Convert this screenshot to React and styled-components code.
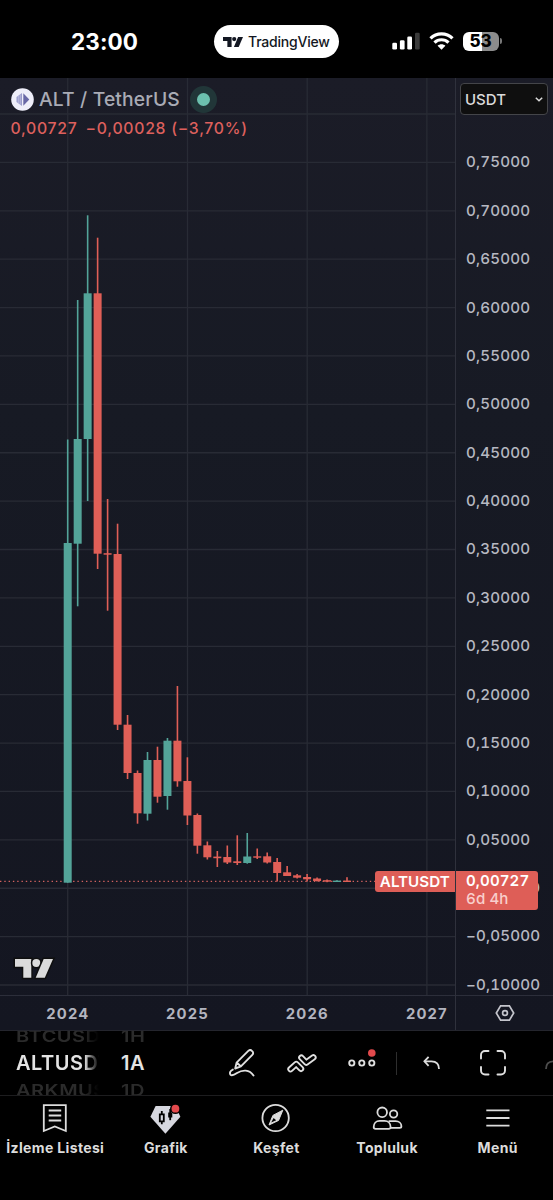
import React from 'react';
import styled, { createGlobalStyle } from 'styled-components';

const GlobalStyle = createGlobalStyle`
  body {
    margin: 0;
    background: #000;
    font-family: 'Inter', 'Liberation Sans', sans-serif;
  }

  svg {
    display: block;
    flex: none;
  }
`;

const Screen = styled.div`
  width: 553px;
  height: 1200px;
  display: flex;
  flex-direction: column;
  overflow: hidden;
  background: #000;
  color: #dbdbdb;
`;

/* status bar */

const StatusBar = styled.header`
  height: 78px;
  flex: none;
  box-sizing: border-box;
  padding: 25px 51.5px 0 71px;
  display: flex;
  align-items: flex-start;
`;

const Clock = styled.div`
  width: 143px;
  line-height: 33px;
  font-size: 22.5px;
  font-weight: 700;
  letter-spacing: 0.1px;
  color: #fff;
`;

const AppPill = styled.div`
  width: 124.5px;
  height: 33px;
  box-sizing: border-box;
  padding-left: 9px;
  display: flex;
  align-items: center;
  gap: 5px;
  border-radius: 17px;
  background: #fff;
  color: #131722;
  font-size: 14px;
  font-weight: 500;
  letter-spacing: -0.2px;
`;

const StatusIcons = styled.div`
  height: 32px;
  margin-left: auto;
  display: flex;
  align-items: center;
  gap: 9px;
`;

const Battery = styled.div`
  display: flex;
  align-items: center;
  gap: 1px;
`;

const BatteryBody = styled.div`
  width: 36px;
  height: 19px;
  border-radius: 6px;
  background: linear-gradient(90deg, #fff 54%, #8c8c8c 54%);
  color: #000;
  font-size: 17px;
  font-weight: 800;
  line-height: 19px;
  text-align: center;
`;

const BatteryNub = styled.div`
  width: 2px;
  height: 6px;
  border-radius: 0 2px 2px 0;
  background: #777;
`;

/* chart */

const ChartArea = styled.main`
  height: 952px;
  flex: none;
  display: flex;
  background: linear-gradient(180deg, #1b1c27 0%, #171a24 35%, #141621 100%);
`;

const PlotColumn = styled.section`
  width: 455px;
  flex: none;
`;

const Plot = styled.div`
  position: relative;
  height: 917px;
`;

const Legend = styled.div`
  position: absolute;
  left: 11px;
  top: 7px;
`;

const SymbolRow = styled.div`
  height: 28px;
  display: flex;
  align-items: center;
  font-size: 19.3px;
  font-weight: 500;
  color: #a9abb5;
`;

const SymbolName = styled.span`
  width: 146px;
  margin-left: 5px;
  white-space: nowrap;
  letter-spacing: 0.15px;
`;

const MarketDot = styled.span`
  width: 13px;
  height: 13px;
  margin-left: 5px;
  border: 7px solid #213638;
  border-radius: 50%;
  background: #6cc0ae;
`;

const ValueRow = styled.div`
  display: flex;
  gap: 8px;
  margin: 6px 0 0 -0.5px;
  line-height: 20px;
  font-size: 15.8px;
  font-weight: 550;
  letter-spacing: 0.72px;
  white-space: nowrap;
  color: #dd605d;
`;

const Watermark = styled.div`
  position: absolute;
  left: 15px;
  top: 881px;
`;

const SymbolTag = styled.div`
  position: absolute;
  right: 0;
  top: 793px;
  width: 80.5px;
  height: 21px;
  line-height: 22px;
  border-radius: 3px 0 0 3px;
  background: #de5e57;
  color: #fff;
  font-size: 15.2px;
  font-weight: 600;
  text-align: center;
`;

const TimeAxis = styled.div`
  height: 35px;
  box-sizing: border-box;
  padding-left: 8px;
  display: flex;
  overflow: hidden;
  border-top: 1px solid #2c2e3a;
`;

const TimeLabel = styled.span`
  width: 119.7px;
  flex: none;
  line-height: 36px;
  text-align: center;
  font-size: 14.8px;
  font-weight: 700;
  letter-spacing: 1.2px;
  color: #b2b4bf;
`;

const PriceAxis = styled.aside`
  position: relative;
  width: 98px;
  box-sizing: border-box;
  display: flex;
  flex-direction: column;
  border-left: 1px solid #2f313c;
`;

const CurrencySelect = styled.button`
  width: 88px;
  height: 32px;
  box-sizing: border-box;
  margin: 5px 0 0 4px;
  padding: 0 4px;
  display: flex;
  flex: none;
  align-items: center;
  justify-content: space-between;
  border: 1.5px solid #444549;
  border-radius: 4px;
  background: #0f0f0f;
  color: #dbdbdb;
  font-family: inherit;
  font-size: 15px;
  font-weight: 500;
`;

const PriceList = styled.div`
  height: 880px;
  padding: 23.4px 0 0 10px;
  box-sizing: border-box;
  display: flex;
  flex-direction: column;
`;

const PriceLabel = styled.span`
  height: 48.38px;
  flex: none;
  line-height: 48.38px;
  font-size: 15.2px;
  font-weight: 550;
  font-variant-numeric: tabular-nums;
  letter-spacing: 0.15px;
  white-space: nowrap;
  color: #b6b8c1;
`;

const PriceTag = styled.div`
  position: absolute;
  left: 0;
  top: 793px;
  width: 81.5px;
  height: 38.5px;
  box-sizing: border-box;
  padding: 1px 0 0 10px;
  border-radius: 0 3px 3px 0;
  background: #de5e57;
  color: #fff;
  font-size: 15.1px;
  font-weight: 600;
  font-variant-numeric: tabular-nums;
  line-height: 18px;
  letter-spacing: 0.1px;
`;

const Countdown = styled.div`
  color: #f8cfcc;
  font-weight: 500;
`;

const AxisSettings = styled.div`
  height: 35px;
  flex: none;
  box-sizing: border-box;
  display: flex;
  align-items: center;
  justify-content: center;
  border-top: 1px solid #2c2e3a;
`;

/* drawing toolbar */

const Toolbar = styled.div`
  height: 66px;
  flex: none;
  box-sizing: border-box;
  display: flex;
  border-top: 1px solid #24252d;
  border-bottom: 1.5px solid #1d1d1f;
  overflow: hidden;
`;

const Wheel = styled.div`
  width: ${(props) => props.$width}px;
  flex: none;
  margin-left: ${(props) => props.$gap}px;
  overflow: hidden;
  display: flex;
  flex-direction: column;
  font-size: 20px;
  font-weight: 600;
  letter-spacing: 0.5px;
  white-space: nowrap;
  ${(props) =>
    props.$fade &&
    'mask-image: linear-gradient(90deg, #000 82%, transparent 100%);'}
`;

const WheelItem = styled.span`
  height: 27px;
  flex: none;
  line-height: 27px;
  color: ${(props) => (props.$active ? '#e4e4e4' : '#2b2b2b')};
  ${(props) => !props.$active && 'transform: scaleY(0.8);'}

  &:first-child {
    margin-top: -8px;
  }
`;

const ToolButtons = styled.div`
  flex: 1;
  min-width: 0;
  padding-left: 62.5px;
  display: flex;
  align-items: center;
  overflow: hidden;
`;

const Tool = styled.div`
  width: ${(props) => props.$width}px;
  flex: none;
  display: flex;
  justify-content: center;
  opacity: ${(props) => (props.$dim ? 0.35 : 1)};
`;

const Separator = styled.div`
  width: 1px;
  height: 23px;
  flex: none;
  margin-left: 4.5px;
  background: #2e2e2e;
`;

/* bottom tabs */

const TabBar = styled.nav`
  flex: 1;
  display: grid;
  grid-template-columns: repeat(5, 1fr);
`;

const Tab = styled.div`
  padding-top: 6px;
  display: flex;
  flex-direction: column;
  align-items: center;
  gap: 2px;
  font-size: 14px;
  font-weight: 700;
  line-height: 23px;
  letter-spacing: 0.35px;
  white-space: nowrap;
  color: #dcdcdc;
`;

const PRICES = [
  '0,75000', '0,70000', '0,65000', '0,60000', '0,55000', '0,50000',
  '0,45000', '0,40000', '0,35000', '0,30000', '0,25000', '0,20000',
  '0,15000', '0,10000', '0,05000', '−0,00000', '−0,05000', '−0,10000',
];

const YEARS = ['2024', '2025', '2026', '2027'];

// [wick top, body top, body bottom, wick bottom, rising]
const CANDLES = [
  [361.5, 465, 804.7, 804.7, true],
  [222, 361, 465.7, 528.3, true],
  [137.3, 215.3, 361, 423, true],
  [159.7, 215.3, 475.7, 491],
  [421, 475.2, 476.7, 532.7],
  [445.7, 476, 646.7, 652],
  [637, 646.7, 695, 701],
  [692.5, 695, 735.3, 745.7],
  [674, 682, 735.7, 742.5, true],
  [668.7, 682, 718.7, 724.7],
  [660, 662.7, 718, 731.7, true],
  [608, 662.7, 703.3, 708.7],
  [679.3, 703, 737.5, 747],
  [735.5, 737, 767.7, 775.7],
  [763.5, 767.3, 779.3, 781.5],
  [773, 778.6, 780.2, 789],
  [767.5, 779, 784.5, 786],
  [757.3, 783.3, 785, 787],
  [755, 778.5, 785, 785.7, true],
  [770.5, 778.3, 779.7, 781],
  [774.5, 778.3, 784.5, 785.5],
  [780, 784, 795, 803.5],
  [788, 794.3, 798, 798],
  [796, 797.3, 799.7, 800.5],
  [796, 799, 801.3, 803.5],
  [799.5, 800.5, 803, 803.5],
  [801.5, 802.2, 803.7, 804.2],
  [802.2, 802.6, 804, 804, true],
  [799.2, 802.6, 804, 804],
];

function TradingViewMark({ width, color, outline }) {
  return (
    <svg width={width} viewBox="0 0 38 19" overflow="visible">
      <g
        fill={color}
        stroke={outline}
        strokeWidth={outline ? 3 : 0}
        paintOrder="stroke"
      >
        <path d="M0 0H16.3V18.8H8.3V7.8H0Z" />
        <circle cx="21.3" cy="4" r="4" />
        <path d="M28.7 0H38L29.8 18.8H20.7Z" />
      </g>
    </svg>
  );
}

function CandleChart() {
  const rows = Array.from({ length: 19 }, (_, i) => 36 + i * 48.39);
  const cols = [67.7, 187.5, 307.2, 426.9];

  return (
    <svg width="455" height="917">
      <g stroke="#282b35" strokeWidth="1.3">
        {rows.map((y) => (
          <line key={y} x1="0" x2="455" y1={y} y2={y} />
        ))}
        {cols.map((x) => (
          <line key={x} y1="0" y2="917" x1={x} x2={x} />
        ))}
      </g>
      <line
        x1="0"
        x2="375"
        y1="803.4"
        y2="803.4"
        stroke="#d0625f"
        strokeWidth="1.3"
        strokeDasharray="1.4 2.9"
      />
      {CANDLES.map(([high, top, bottom, low, up], i) => {
        const x = 67.7 + i * 9.975;
        return (
          <g key={x} fill={up ? '#53a499' : '#e05f57'}>
            <rect x={x - 0.8} y={high} width="1.6" height={low - high} />
            <rect x={x - 4} y={top} width="8" height={bottom - top} />
          </g>
        );
      })}
    </svg>
  );
}

function StatusSection() {
  return (
    <StatusBar>
      <Clock>23:00</Clock>
      <AppPill>
        <TradingViewMark width={20} color="#131722" />
        TradingView
      </AppPill>
      <StatusIcons>
        <svg width="28" height="18" viewBox="0 0 28 18" fill="#fff">
          <rect x="0.3" y="10.8" width="4.7" height="6.7" rx="1.3" />
          <rect x="7.9" y="8.2" width="4.7" height="9.3" rx="1.3" />
          <rect x="15.3" y="4.5" width="4.7" height="13" rx="1.3" />
          <rect x="23" y="0.8" width="4.7" height="16.7" rx="1.3" fill="#3a3a3a" />
        </svg>
        <svg width="25" height="18" viewBox="0 0 25 18" fill="none" stroke="#fff" strokeWidth="3.2">
          <path d="M1.5 6.4C7.6 0.4 17.4 0.4 23.5 6.4" />
          <path d="M5.5 10.6C9.4 6.8 15.6 6.8 19.5 10.6" />
          <path d="M8.6 13.8C10.8 11.8 14.2 11.8 16.4 13.8L12.5 17.8Z" fill="#fff" stroke="none" />
        </svg>
        <Battery>
          <BatteryBody>53</BatteryBody>
          <BatteryNub />
        </Battery>
      </StatusIcons>
    </StatusBar>
  );
}

function ChartSection() {
  return (
    <ChartArea>
      <PlotColumn>
        <Plot>
          <CandleChart />
          <Legend>
            <SymbolRow>
              <svg width="23" height="23" viewBox="0 0 23 23">
                <circle cx="11.5" cy="11.5" r="11.3" fill="#eeeef9" />
                <path d="M11 5V18L5.5 14V9Z" fill="#9a9bcb" />
                <path d="M7.3 8V15.2M9.2 6.5V16.5" stroke="#cfd0ea" strokeWidth="0.6" />
                <path d="M12.3 5.2L18.3 11.5L12.3 17.8Z" fill="#6868a6" />
              </svg>
              <SymbolName>ALT / TetherUS</SymbolName>
              <MarketDot />
            </SymbolRow>
            <ValueRow>
              <span>0,00727</span>
              <span>−0,00028 (−3,70%)</span>
            </ValueRow>
          </Legend>
          <Watermark>
            <TradingViewMark width={38} color="#dbdbdb" outline="#0f0f0f" />
          </Watermark>
          <SymbolTag>ALTUSDT</SymbolTag>
        </Plot>
        <TimeAxis>
          {YEARS.map((year) => (
            <TimeLabel key={year}>{year}</TimeLabel>
          ))}
        </TimeAxis>
      </PlotColumn>
      <PriceAxis>
        <CurrencySelect>
          USDT
          <svg width="8" height="5" viewBox="0 0 8 5" fill="none" stroke="#dbdbdb" strokeWidth="1.5">
            <path d="M0.8 0.8L4 3.8L7.2 0.8" />
          </svg>
        </CurrencySelect>
        <PriceList>
          {PRICES.map((price) => (
            <PriceLabel key={price}>{price}</PriceLabel>
          ))}
        </PriceList>
        <AxisSettings>
          <svg width="20" height="18" viewBox="0 0 20 18" fill="none" stroke="#c4c5cc" strokeWidth="1.7">
            <path d="M5.6 1.8H14.4L18.7 9L14.4 16.2H5.6L1.3 9Z" />
            <circle cx="10" cy="9" r="2.4" />
          </svg>
        </AxisSettings>
        <PriceTag>
          0,00727
          <Countdown>6d 4h</Countdown>
        </PriceTag>
      </PriceAxis>
    </ChartArea>
  );
}

function PenIcon() {
  return (
    <svg width="26" height="28" viewBox="0 0 26 28" fill="none" stroke="#e0e0e0" strokeWidth="1.9" strokeLinejoin="round" strokeLinecap="round">
      <path d="M6.2 19.5L7.6 13.6L19.3 1.9C20.4 0.8 21.8 0.8 22.8 1.8L23.4 2.4C24.4 3.4 24.4 4.8 23.3 5.9L11.9 17.4ZM7.9 13.8L11.8 17.3" />
      <path d="M3.8 20.6C1.2 21.6 0.4 24 1.4 25.6C3 27.4 5.4 25.8 8 24C13.4 20.6 20.4 20.3 24.5 26.5" />
    </svg>
  );
}

// two hollow chevrons: a fat light stroke with a thinner dark one on top
function PatternIcon() {
  const up = 'M3.5 15.2L9.2 10L14 14.8';
  const down = 'M14.4 3.6L19.2 8.6L26.4 3.4';
  return (
    <svg width="30" height="19" viewBox="0 0 30 19" fill="none" strokeLinecap="round" strokeLinejoin="round" overflow="visible">
      <path d={up} stroke="#e0e0e0" strokeWidth="6.4" />
      <path d={up} stroke="#000" strokeWidth="2.7" />
      <path d={down} stroke="#e0e0e0" strokeWidth="6.4" />
      <path d={down} stroke="#000" strokeWidth="2.7" />
    </svg>
  );
}

function MoreIcon() {
  return (
    <svg width="30" height="28" viewBox="0 0 30 28">
      <g fill="none" stroke="#e0e0e0" strokeWidth="1.9">
        <circle cx="4.8" cy="14" r="2.6" />
        <circle cx="14.8" cy="14" r="2.6" />
        <circle cx="24.8" cy="14" r="2.6" />
      </g>
      <circle cx="24.8" cy="4" r="3.8" fill="#e2494c" />
    </svg>
  );
}

function UndoIcon() {
  return (
    <svg width="18" height="14" viewBox="0 0 18 14" fill="none" stroke="#dcdcdc" strokeWidth="1.8">
      <path d="M5.6 0.8L1.4 5.3L5.6 9.8" />
      <path d="M1.4 5.3H8.4C13 5.3 16 8 16 13" />
    </svg>
  );
}

function RedoIcon() {
  return (
    <svg width="18" height="14" viewBox="0 0 18 14" fill="none" stroke="#dcdcdc" strokeWidth="1.8">
      <path d="M12.4 0.8L16.6 5.3L12.4 9.8" />
      <path d="M16.6 5.3H9.6C5 5.3 2 8 2 13" />
    </svg>
  );
}

function FullscreenIcon() {
  return (
    <svg width="26" height="26" viewBox="0 0 26 26" fill="none" stroke="#e0e0e0" strokeWidth="1.9" strokeLinecap="round">
      <path d="M1 8.5V5C1 2.8 2.8 1 5 1H8.5" />
      <path d="M17.5 1H21C23.2 1 25 2.8 25 5V8.5" />
      <path d="M25 17V20.5C25 22.7 23.2 24.5 21 24.5H17.5" />
      <path d="M8.5 24.5H5C2.8 24.5 1 22.7 1 20.5V17" />
    </svg>
  );
}

function ToolbarSection() {
  return (
    <Toolbar>
      <Wheel $width={83} $gap={16} $fade>
        <WheelItem>BTCUSDT</WheelItem>
        <WheelItem $active>ALTUSDT</WheelItem>
        <WheelItem>ARKMUSDT</WheelItem>
      </Wheel>
      <Wheel $width={28} $gap={22}>
        <WheelItem>1H</WheelItem>
        <WheelItem $active>1A</WheelItem>
        <WheelItem>1D</WheelItem>
      </Wheel>
      <ToolButtons>
        <Tool $width={60}>
          <PenIcon />
        </Tool>
        <Tool $width={60}>
          <PatternIcon />
        </Tool>
        <Tool $width={60}>
          <MoreIcon />
        </Tool>
        <Separator />
        <Tool $width={70}>
          <UndoIcon />
        </Tool>
        <Tool $width={51}>
          <FullscreenIcon />
        </Tool>
        <Tool $width={69} $dim>
          <RedoIcon />
        </Tool>
      </ToolButtons>
    </Toolbar>
  );
}

function TabIcon({ children }) {
  return (
    <svg width="32" height="32" viewBox="0 0 32 32" fill="none" stroke="#dcdcdc" strokeWidth="1.8">
      {children}
    </svg>
  );
}

function TabSection() {
  return (
    <TabBar>
      <Tab>
        <TabIcon>
          <path d="M4.8 3.1H26.8V29L15.8 24.4L4.8 29Z" />
          <path d="M9.7 8.5H22.2M9.7 13.5H22.2M9.7 18.5H22.2" />
        </TabIcon>
        İzleme Listesi
      </Tab>
      <Tab>
        <TabIcon>
          <path d="M5.6 4H25.2L30.4 14.7L15.4 31.7L0.4 14.7Z" fill="#d6d7df" stroke="none" />
          <path d="M9.8 12.3H13.8V19.3H9.8ZM11.8 9V12.3M11.8 19.3V22.2" stroke="#000" />
          <path d="M18.2 10.5H22.3V15.5H18.2Z" fill="#000" stroke="none" />
          <path d="M20.2 7V18.2" stroke="#000" />
          <circle cx="25.4" cy="6.7" r="5.4" fill="#000" stroke="none" />
          <circle cx="25.4" cy="6.7" r="3.9" fill="#e2494c" stroke="none" />
        </TabIcon>
        Grafik
      </Tab>
      <Tab>
        <TabIcon>
          <circle cx="15.6" cy="16" r="13.2" />
          <path d="M22.8 8.2L12.9 13.4L9 23L18.6 18.4Z" fill="#dcdcdc" strokeWidth="1" strokeLinejoin="round" />
          <path d="M11.2 20.6L13.6 15.9L16.2 18.3Z" fill="#000" stroke="none" />
        </TabIcon>
        Keşfet
      </Tab>
      <Tab>
        <TabIcon>
          <circle cx="11.2" cy="10.3" r="4.8" />
          <circle cx="22.6" cy="12" r="3.7" />
          <path d="M2.7 25C2.7 21.4 5.2 18.8 8.6 18.8H13.6C17 18.8 19.6 21.4 19.6 25C19.6 26.2 18.9 26.9 17.7 26.9H4.6C3.4 26.9 2.7 26.2 2.7 25Z" />
          <path d="M17.6 19.2H24.6C28 19.2 30.4 21.2 30.4 24.2C30.4 25.3 29.8 25.8 28.8 25.8H19.6" />
        </TabIcon>
        Topluluk
      </Tab>
      <Tab>
        <TabIcon>
          <path d="M4.3 8.4H27.5M4.3 16H27.5M4.3 23.6H27.5" />
        </TabIcon>
        Menü
      </Tab>
    </TabBar>
  );
}

export default function App() {
  return (
    <>
      <GlobalStyle />
      <Screen>
        <StatusSection />
        <ChartSection />
        <ToolbarSection />
        <TabSection />
      </Screen>
    </>
  );
}
